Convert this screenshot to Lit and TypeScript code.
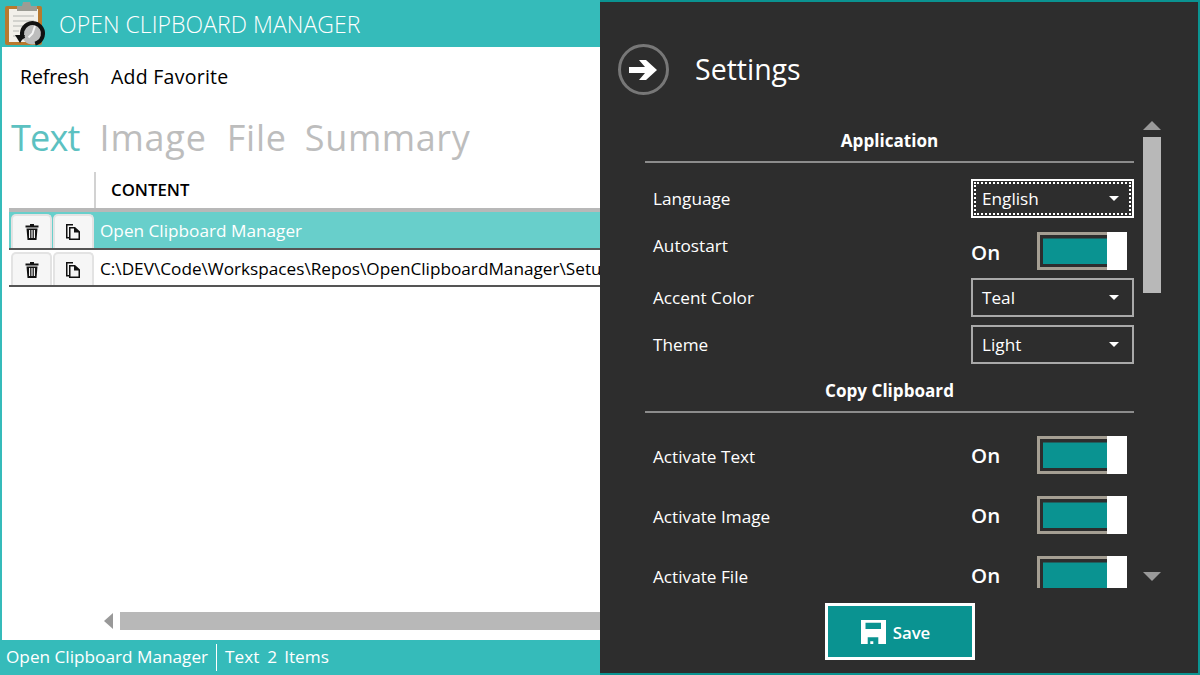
import { LitElement, html, css, svg } from "lit";
import { customElement } from "lit/decorators.js";

const trash = svg`<svg width="14" height="16" viewBox="0 0 14 16"><path fill="#111" d="M5 0h4v1.500h4.500V3.500H.5V1.500H5zM1.500 4.500h11L11.500 16h-9zM4 6v8h1.200V6zM6.400 6v8h1.200V6zM8.800 6v8H10V6z" fill-rule="evenodd"/></svg>`;
const copy = svg`<svg width="15" height="16" viewBox="0 0 15 16"><path fill="#111" fill-rule="evenodd" d="M0 0h7v1.500H1.500V13H3V3h6l5 4.500V16H3v-1.500H0zM4.500 4.500v10h8V8.500H8V4.500z"/></svg>`;

@customElement("app-root")
export class AppRoot extends LitElement {
  static styles = css`
    :host { display: block; width: 1200px; height: 675px; position: relative; overflow: hidden; background: #fff;
      font-family: "Open Sans", "Noto Sans", "Liberation Sans", sans-serif; color: #000; }
    * { box-sizing: border-box; }
    .window { display: flex; flex-direction: column; height: 675px; border-left: 2px solid #35bbba; }
    .titlebar { height: 47px; margin-left: -2px; background: #35bbba; display: flex; align-items: center; gap: 11px; padding-left: 4px; flex: none; }
    .logo { flex: none; width: 44px; height: 47px; }
    .title { color: #fff; font-size: 23px; font-weight: 300; letter-spacing: 0.05px; white-space: nowrap; margin-top: 1px; }
    .menu { display: flex; gap: 22px; padding: 17px 0 0 18px; height: 60px; font-size: 19.500px; letter-spacing: -0.1px; line-height: 26px; flex: none; }
    .menu .wide { letter-spacing: 0.25px; }
    .tabs { display: flex; gap: 20px; padding: 5px 0 0 9px; font-size: 36px; line-height: 52px; height: 58px; letter-spacing: 0.8px; color: #bdbdbd; flex: none; }
    .tabs .active { color: #5cc1c1; letter-spacing: -0.8px; }
    .tabs .last { margin-left: -2px; letter-spacing: 0.6px; }
    .table { margin-left: 7px; flex: none; }
    .thead { height: 47px; display: flex; padding-top: 7px; border-bottom: 4px solid #b8b8b8; }
    .thead .sp { width: 87px; border-right: 2px solid #d2d2d2; }
    .thead .h { padding: 6px 0 0 15px; font-weight: 600; font-size: 16.800px; line-height: 24px; }
    .row { height: 38px; display: flex; align-items: stretch; border-bottom: 2px solid #555; white-space: nowrap; font-size: 17.200px; }
    .row.sel { background: #68cfcb; color: #fff; }
    .row.plain { height: 37px; }
    .btn { width: 41px; margin: 2px 0 0 2px; border: 2px solid #e3e3e3; border-bottom: 0; border-radius: 5px 5px 0 0; background: #f6f6f6; display: flex; align-items: center; justify-content: center; flex: none; }
    .btn + .btn { margin-left: 1px; }
    .cell { padding-left: 6px; line-height: 37px; }
    .grow { flex: 1; min-height: 0; }
    .hscroll { height: 18px; margin: 0 0 10px 102px; display: flex; align-items: center; gap: 7px; flex: none; }
    .hscroll i { width: 0; height: 0; border: 8.500px solid transparent; border-left: 0; border-right: 9px solid #999; display: block; }
    .hscroll b { flex: 1; height: 18px; background: #b8b8b8; display: block; }
    .status { height: 35px; margin-left: -2px; background: #35bbba; color: #fff; display: flex; align-items: center; padding: 0 0 2px 6px; font-size: 17.200px; flex: none; white-space: nowrap; }
    .status .div { width: 1px; height: 27px; background: #fff; margin: 2px 8px 0 8px; }
    .status .n { margin: 0 7px 0 8px; }

    .fly { position: absolute; left: 600px; top: 0; width: 600px; height: 675px; background: #2d2d2d; color: #fff;
      border: 2px solid #0a9391; border-left: 0; display: flex; flex-direction: column; }
    .head { display: flex; align-items: center; height: 121px; padding: 14px 0 0 18px; gap: 26px; flex: none; }
    .circle { width: 51px; height: 51px; border: 3px solid #777; border-radius: 50%; display: flex; align-items: center; justify-content: center; flex: none; }
    .stitle { font-size: 28.500px; font-weight: 400; margin-bottom: 2px; }
    .mid { display: flex; height: 467px; flex: none; padding-left: 45px; }
    .content { width: 489px; height: 465px; overflow: hidden; flex: none; }
    .sec { text-align: center; font-weight: 700; font-size: 17.100px; line-height: 24px; padding-top: 6px; height: 40px; border-bottom: 2px solid #8c8c8c; }
    .line { display: flex; align-items: center; padding-left: 8px; font-size: 17.200px; }
    .line .lab { width: 318px; flex: none; }
    .sel-box { width: 163px; height: 39px; border: 2px solid #a9a9a9; display: flex; align-items: center; justify-content: space-between; padding: 0 13px 0 9px; font-size: 17.200px; flex: none; background: #2d2d2d; }
    .sel-box i { width: 0; height: 0; border: 5.500px solid transparent; border-bottom: 0; border-top: 5px solid #fff; display: block; }
    .sel-box.focus { border-color: #fff; outline: 2px dotted #fff; outline-offset: -5px; }
    .onoff { font-size: 20.500px; font-weight: 600; width: 66px; flex: none; }
    .tg { width: 90px; height: 38px; border: 3px solid #a59f93; border-right: 0; padding: 3px 0 3px 3px; flex: none; display: flex; }
    .tg .fill { flex: 1; background: #0a9391; border-top: 1px solid #1f5f5e; }
    .tg .thumb { width: 20px; margin: -6px 0; background: #fff; }
    .r1 { margin-top: 15px; height: 41px; }
    .r2 { height: 47px; margin-top: 5px; padding-top: 7px; }
    .r2 .lab { align-self: flex-start; line-height: 30px; }
    .r2 .onoff { margin-top: 2px; }
    .r3 { height: 39px; margin-top: 7px; }
    .r4 { height: 39px; margin-top: 8px; }
    .sec2 { margin-top: 9px; }
    .r5 { height: 38px; margin-top: 23px; }
    .r6 { height: 38px; margin-top: 22px; }
    .r5 .lab, .r6 .lab { padding-top: 2px; }
    .vs { width: 18px; margin: -2px 0 0 9px; height: 465px; flex: none; display: flex; flex-direction: column; }
    .up { width: 0; height: 0; border: 9px solid transparent; border-top: 0; border-bottom: 9px solid #999; display: block; margin: 0 0 7px 0; flex: none; }
    .thumbv { height: 156px; background: #b8b8b8; flex: none; }
    .dn { width: 0; height: 0; border: 9px solid transparent; border-bottom: 0; border-top: 9px solid #999; display: block; margin-top: 279px; flex: none; }
    .foot { flex: 1; display: flex; justify-content: center; padding: 13px 0 0 0; }
    .save { width: 150px; height: 57px; border: 3px solid #fff; background: #0a9391; display: flex; align-items: center; justify-content: center; gap: 7px; padding-right: 8px; font-weight: 600; font-size: 16.800px; margin-left: 1px; }
    .save span { margin-top: 1px; }
  `;

  private toggle() {
    return html`<div class="tg"><div class="fill"></div><div class="thumb"></div></div>`;
  }

  render() {
    return html`
      <div class="window">
        <div class="titlebar">
          <svg class="logo" viewBox="0 0 44 47">
            <rect x="1" y="6" width="37" height="39" rx="2" fill="#b8792e"/>
            <rect x="5" y="9" width="29" height="33" fill="#f2f0ea"/>
            <path d="M9 16h21M9 21h21M9 26h10M9 31h6M9 36h4" stroke="#c9c9c5" stroke-width="1.500"/>
            <path d="M13 11V6h5l1-4h7l1 4h6v5z" fill="#9c9c94"/>
            <circle cx="28.500" cy="33.500" r="11" fill="#bdbdbd"/>
            <circle cx="28.500" cy="33.500" r="10.500" fill="none" stroke="#111" stroke-width="4" stroke-dasharray="52 14" transform="rotate(150 28.500 33.500)"/>
            <path d="M11 35h10l-5 8z" fill="#111"/>
            <path d="M31 26l-2.500 7.500-4 4" stroke="#f4f4f4" stroke-width="2" fill="none"/>
          </svg>
          <div class="title">OPEN CLIPBOARD MANAGER</div>
        </div>
        <div class="menu"><span>Refresh</span><span class="wide">Add Favorite</span></div>
        <div class="tabs"><span class="active">Text</span><span>Image</span><span>File</span><span class="last">Summary</span></div>
        <div class="table">
          <div class="thead"><div class="sp"></div><div class="h">CONTENT</div></div>
          <div class="row sel">
            <div class="btn">${trash}</div><div class="btn">${copy}</div>
            <div class="cell">Open Clipboard Manager</div>
          </div>
          <div class="row plain">
            <div class="btn">${trash}</div><div class="btn">${copy}</div>
            <div class="cell">C:\\DEV\\Code\\Workspaces\\Repos\\OpenClipboardManager\\Setup</div>
          </div>
        </div>
        <div class="grow"></div>
        <div class="hscroll"><i></i><b></b></div>
        <div class="status"><span>Open Clipboard Manager</span><span class="div"></span><span>Text</span><span class="n">2</span><span>Items</span></div>
      </div>
      <div class="fly">
        <div class="head">
          <div class="circle">
            <svg width="30" height="24" viewBox="0 0 30 24"><path fill="#fff" d="M0 9h16l-6-7h7l11 10-11 10h-7l6-7H0z"/></svg>
          </div>
          <div class="stitle">Settings</div>
        </div>
        <div class="mid">
          <div class="content">
            <div class="sec">Application</div>
            <div class="line r1"><div class="lab">Language</div><div class="sel-box focus"><span>English</span><i></i></div></div>
            <div class="line r2"><div class="lab">Autostart</div><div class="onoff">On</div>${this.toggle()}</div>
            <div class="line r3"><div class="lab">Accent Color</div><div class="sel-box"><span>Teal</span><i></i></div></div>
            <div class="line r4"><div class="lab">Theme</div><div class="sel-box"><span>Light</span><i></i></div></div>
            <div class="sec sec2">Copy Clipboard</div>
            <div class="line r5"><div class="lab">Activate Text</div><div class="onoff">On</div>${this.toggle()}</div>
            <div class="line r6"><div class="lab">Activate Image</div><div class="onoff">On</div>${this.toggle()}</div>
            <div class="line r6"><div class="lab">Activate File</div><div class="onoff">On</div>${this.toggle()}</div>
          </div>
          <div class="vs">
            <i class="up"></i>
            <div class="thumbv"></div>
            <i class="dn"></i>
          </div>
        </div>
        <div class="foot">
          <div class="save">
            <svg width="25" height="24" viewBox="0 0 25 24"><path fill="#fff" fill-rule="evenodd" d="M0 0h25v24H0zM4.500 2.700V9H20V2.700zM6.700 17.300V24h10.600v-6.700zM9.300 21.300h3V24h-3z"/></svg>
            <span>Save</span>
          </div>
        </div>
      </div>
    `;
  }
}
